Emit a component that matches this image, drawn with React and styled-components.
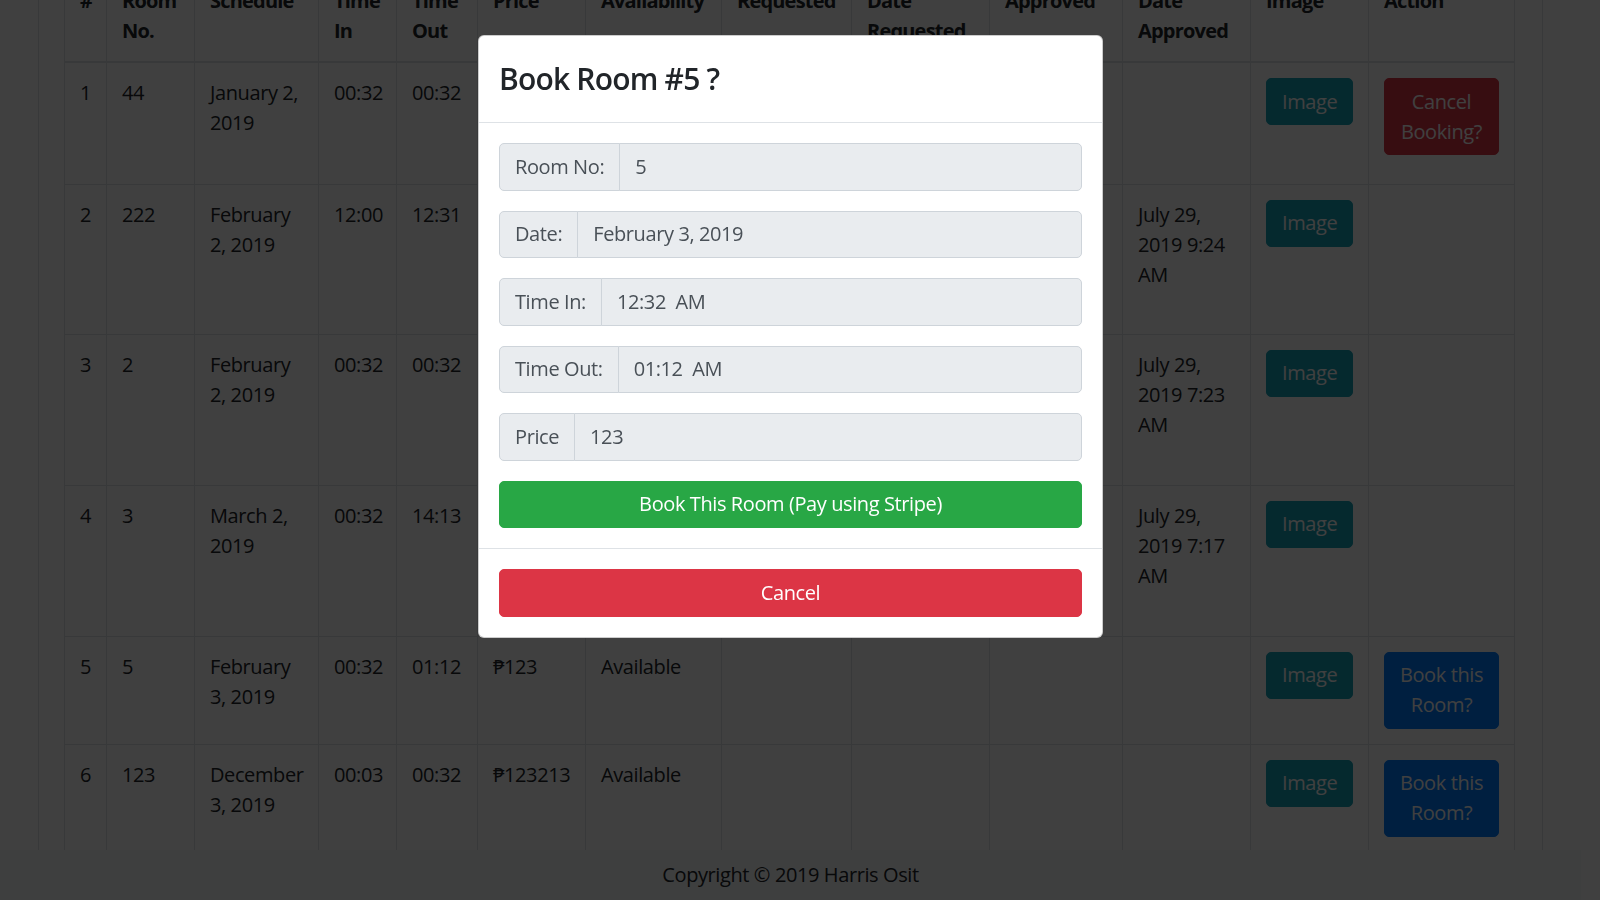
import React from 'react';
import styled, { createGlobalStyle, css } from 'styled-components';

const GlobalStyle = createGlobalStyle`
  *, *::before, *::after {
    box-sizing: border-box;
  }

  html, body {
    margin: 0;
    padding: 0;
    height: 100%;
    overflow: hidden;
    background: #fff;
  }

  body {
    font-family: "Open Sans", "Noto Sans", sans-serif;
    font-size: 20px;
    line-height: 1.5;
    letter-spacing: -0.4px;
    color: #212529;
  }
`;

const colors = {
  info: '#17a2b8',
  danger: '#dc3545',
  primary: '#007bff',
  success: '#28a745',
  border: '#dee2e6',
  inputBorder: '#ced4da',
  inputBg: '#e9ecef',
  inputText: '#495057',
};

// layout width of the original page (its scrollbar is hidden by the modal)
export const Page = styled.div`
  display: flex;
  flex-direction: column;
  width: 1581px;
  height: 100vh;
`;

export const Main = styled.main`
  flex: 1;
  overflow: hidden;
  padding: 0 38px;
`;

export const Card = styled.div`
  margin-top: -56px;
  border: 1px solid ${colors.border};
  padding: 25px;
`;

export const Table = styled.table`
  width: 1451px;
  table-layout: fixed;
  border-collapse: collapse;
`;

export const HeadCell = styled.th`
  padding: 15px;
  text-align: left;
  vertical-align: top;
  font-weight: 700;
  letter-spacing: -0.8px;
  border: 1px solid ${colors.border};
  border-bottom-width: 2px;
`;

export const Row = styled.tr`
  height: ${({ $h }) => ($h ? `${$h}px` : 'auto')};
`;

export const Cell = styled.td`
  padding: 15px;
  vertical-align: top;
  border: 1px solid ${colors.border};
`;

export const Button = styled.button`
  display: inline-block;
  padding: 7.5px 15px;
  font-family: inherit;
  font-size: 20px;
  line-height: 1.5;
  font-weight: 400;
  letter-spacing: inherit;
  text-align: center;
  color: #fff;
  background: ${({ $variant }) => colors[$variant]};
  border: 1px solid ${({ $variant }) => colors[$variant]};
  border-radius: 5px;
  cursor: pointer;

  /* two-line buttons in the action column */
  ${({ $compact }) =>
    $compact &&
    css`
      padding: 7.5px 12px;
    `}

  ${({ $block }) =>
    $block &&
    css`
      display: block;
      width: 100%;
      padding: 7.75px 15px;
    `}
`;

export const Footer = styled.footer`
  flex-shrink: 0;
  height: 50px;
  padding-top: 10px;
  text-align: center;
  background: #f8f9fa;
`;

export const Backdrop = styled.div`
  position: fixed;
  inset: 0;
  background: rgba(0, 0, 0, 0.75);
`;

export const ModalLayer = styled.div`
  position: fixed;
  top: 0;
  left: 0;
  width: 1581px;
  height: 100%;
`;

export const Dialog = styled.div`
  width: 625px;
  margin: 35px auto 0;
  background: #fff;
  border: 1px solid rgba(0, 0, 0, 0.2);
  border-radius: 6px;
`;

export const ModalHeader = styled.div`
  padding: 20px 20px 21px;
  border-bottom: 1px solid ${colors.border};
`;

export const ModalTitle = styled.h4`
  margin: 0;
  font-size: 30px;
  font-weight: 600;
  line-height: 45px;
  letter-spacing: -0.8px;
`;

export const ModalBody = styled.div`
  padding: 20px;
`;

export const ModalFooter = styled.div`
  padding: 20px;
  border-top: 1px solid ${colors.border};
`;

export const InputGroup = styled.div`
  display: flex;
  height: 47.5px;
  margin-bottom: 20px;
`;

export const Addon = styled.span`
  display: flex;
  align-items: center;
  padding: 0 15px;
  white-space: nowrap;
  color: ${colors.inputText};
  background: ${colors.inputBg};
  border: 1px solid ${colors.inputBorder};
  border-radius: 5px 0 0 5px;
`;

export const ReadonlyField = styled.div`
  display: flex;
  align-items: center;
  flex: 1;
  min-width: 0;
  margin-left: -1px;
  padding: 0 15px;
  white-space: pre;
  color: ${colors.inputText};
  background: ${colors.inputBg};
  border: 1px solid ${colors.inputBorder};
  border-radius: 0 5px 5px 0;
`;

const columns = [
  ['#', 42],
  ['Room No.', 88],
  ['Schedule', 124],
  ['Time In', 78],
  ['Time Out', 81],
  ['Price', 108],
  ['Availability', 136],
  ['Requested', 130],
  ['Date Requested', 138],
  ['Approved', 133],
  ['Date Approved', 128],
  ['Image', 118],
  ['Action', 146],
];

// cells under the modal are left empty, rows keep their original heights
const bookings = [
  { id: 1, room: '44', date: 'January 2, 2019', tin: '00:32', tout: '00:32', action: 'cancel', h: 122 },
  { id: 2, room: '222', date: 'February 2, 2019', tin: '12:00', tout: '12:31', dateApproved: 'July 29, 2019 9:24 AM', h: 150 },
  { id: 3, room: '2', date: 'February 2, 2019', tin: '00:32', tout: '00:32', dateApproved: 'July 29, 2019 7:23 AM', h: 151 },
  { id: 4, room: '3', date: 'March 2, 2019', tin: '00:32', tout: '14:13', dateApproved: 'July 29, 2019 7:17 AM', h: 151 },
  { id: 5, room: '5', date: 'February 3, 2019', tin: '00:32', tout: '01:12', price: '₱123', status: 'Available', action: 'book' },
  { id: 6, room: '123', date: 'December 3, 2019', tin: '00:03', tout: '00:32', price: '₱123213', status: 'Available', action: 'book' },
];

const modalFields = [
  ['Room No:', '5'],
  ['Date:', 'February 3, 2019'],
  ['Time In:', '12:32  AM'],
  ['Time Out:', '01:12  AM'],
  ['Price', '123'],
];

function BookingRow({ b }) {
  return (
    <Row $h={b.h}>
      <Cell>{b.id}</Cell>
      <Cell>{b.room}</Cell>
      <Cell>{b.date}</Cell>
      <Cell>{b.tin}</Cell>
      <Cell>{b.tout}</Cell>
      <Cell>{b.price}</Cell>
      <Cell>{b.status}</Cell>
      <Cell />
      <Cell />
      <Cell />
      <Cell>{b.dateApproved}</Cell>
      <Cell>
        <Button $variant="info">Image</Button>
      </Cell>
      <Cell>
        {b.action === 'cancel' && (
          <Button $variant="danger" $compact>
            Cancel Booking?
          </Button>
        )}
        {b.action === 'book' && (
          <Button $variant="primary" $compact>
            Book this Room?
          </Button>
        )}
      </Cell>
    </Row>
  );
}

function BookModal() {
  return (
    <ModalLayer>
      <Dialog>
        <ModalHeader>
          <ModalTitle>Book Room #5 ?</ModalTitle>
        </ModalHeader>
        <ModalBody>
          {modalFields.map(([label, value]) => (
            <InputGroup key={label}>
              <Addon>{label}</Addon>
              <ReadonlyField>{value}</ReadonlyField>
            </InputGroup>
          ))}
          <Button $variant="success" $block>
            Book This Room (Pay using Stripe)
          </Button>
        </ModalBody>
        <ModalFooter>
          <Button $variant="danger" $block>
            Cancel
          </Button>
        </ModalFooter>
      </Dialog>
    </ModalLayer>
  );
}

export default function App() {
  return (
    <>
      <GlobalStyle />
      <Page>
        <Main>
          <Card>
            <Table>
              <colgroup>
                {columns.map(([name, w]) => (
                  <col key={name} style={{ width: w }} />
                ))}
              </colgroup>
              <thead>
                <tr>
                  {columns.map(([name]) => (
                    <HeadCell key={name}>{name}</HeadCell>
                  ))}
                </tr>
              </thead>
              <tbody>
                {bookings.map(b => (
                  <BookingRow key={b.id} b={b} />
                ))}
              </tbody>
            </Table>
          </Card>
        </Main>
        <Footer>Copyright © 2019 Harris Osit</Footer>
      </Page>
      <Backdrop />
      <BookModal />
    </>
  );
}
